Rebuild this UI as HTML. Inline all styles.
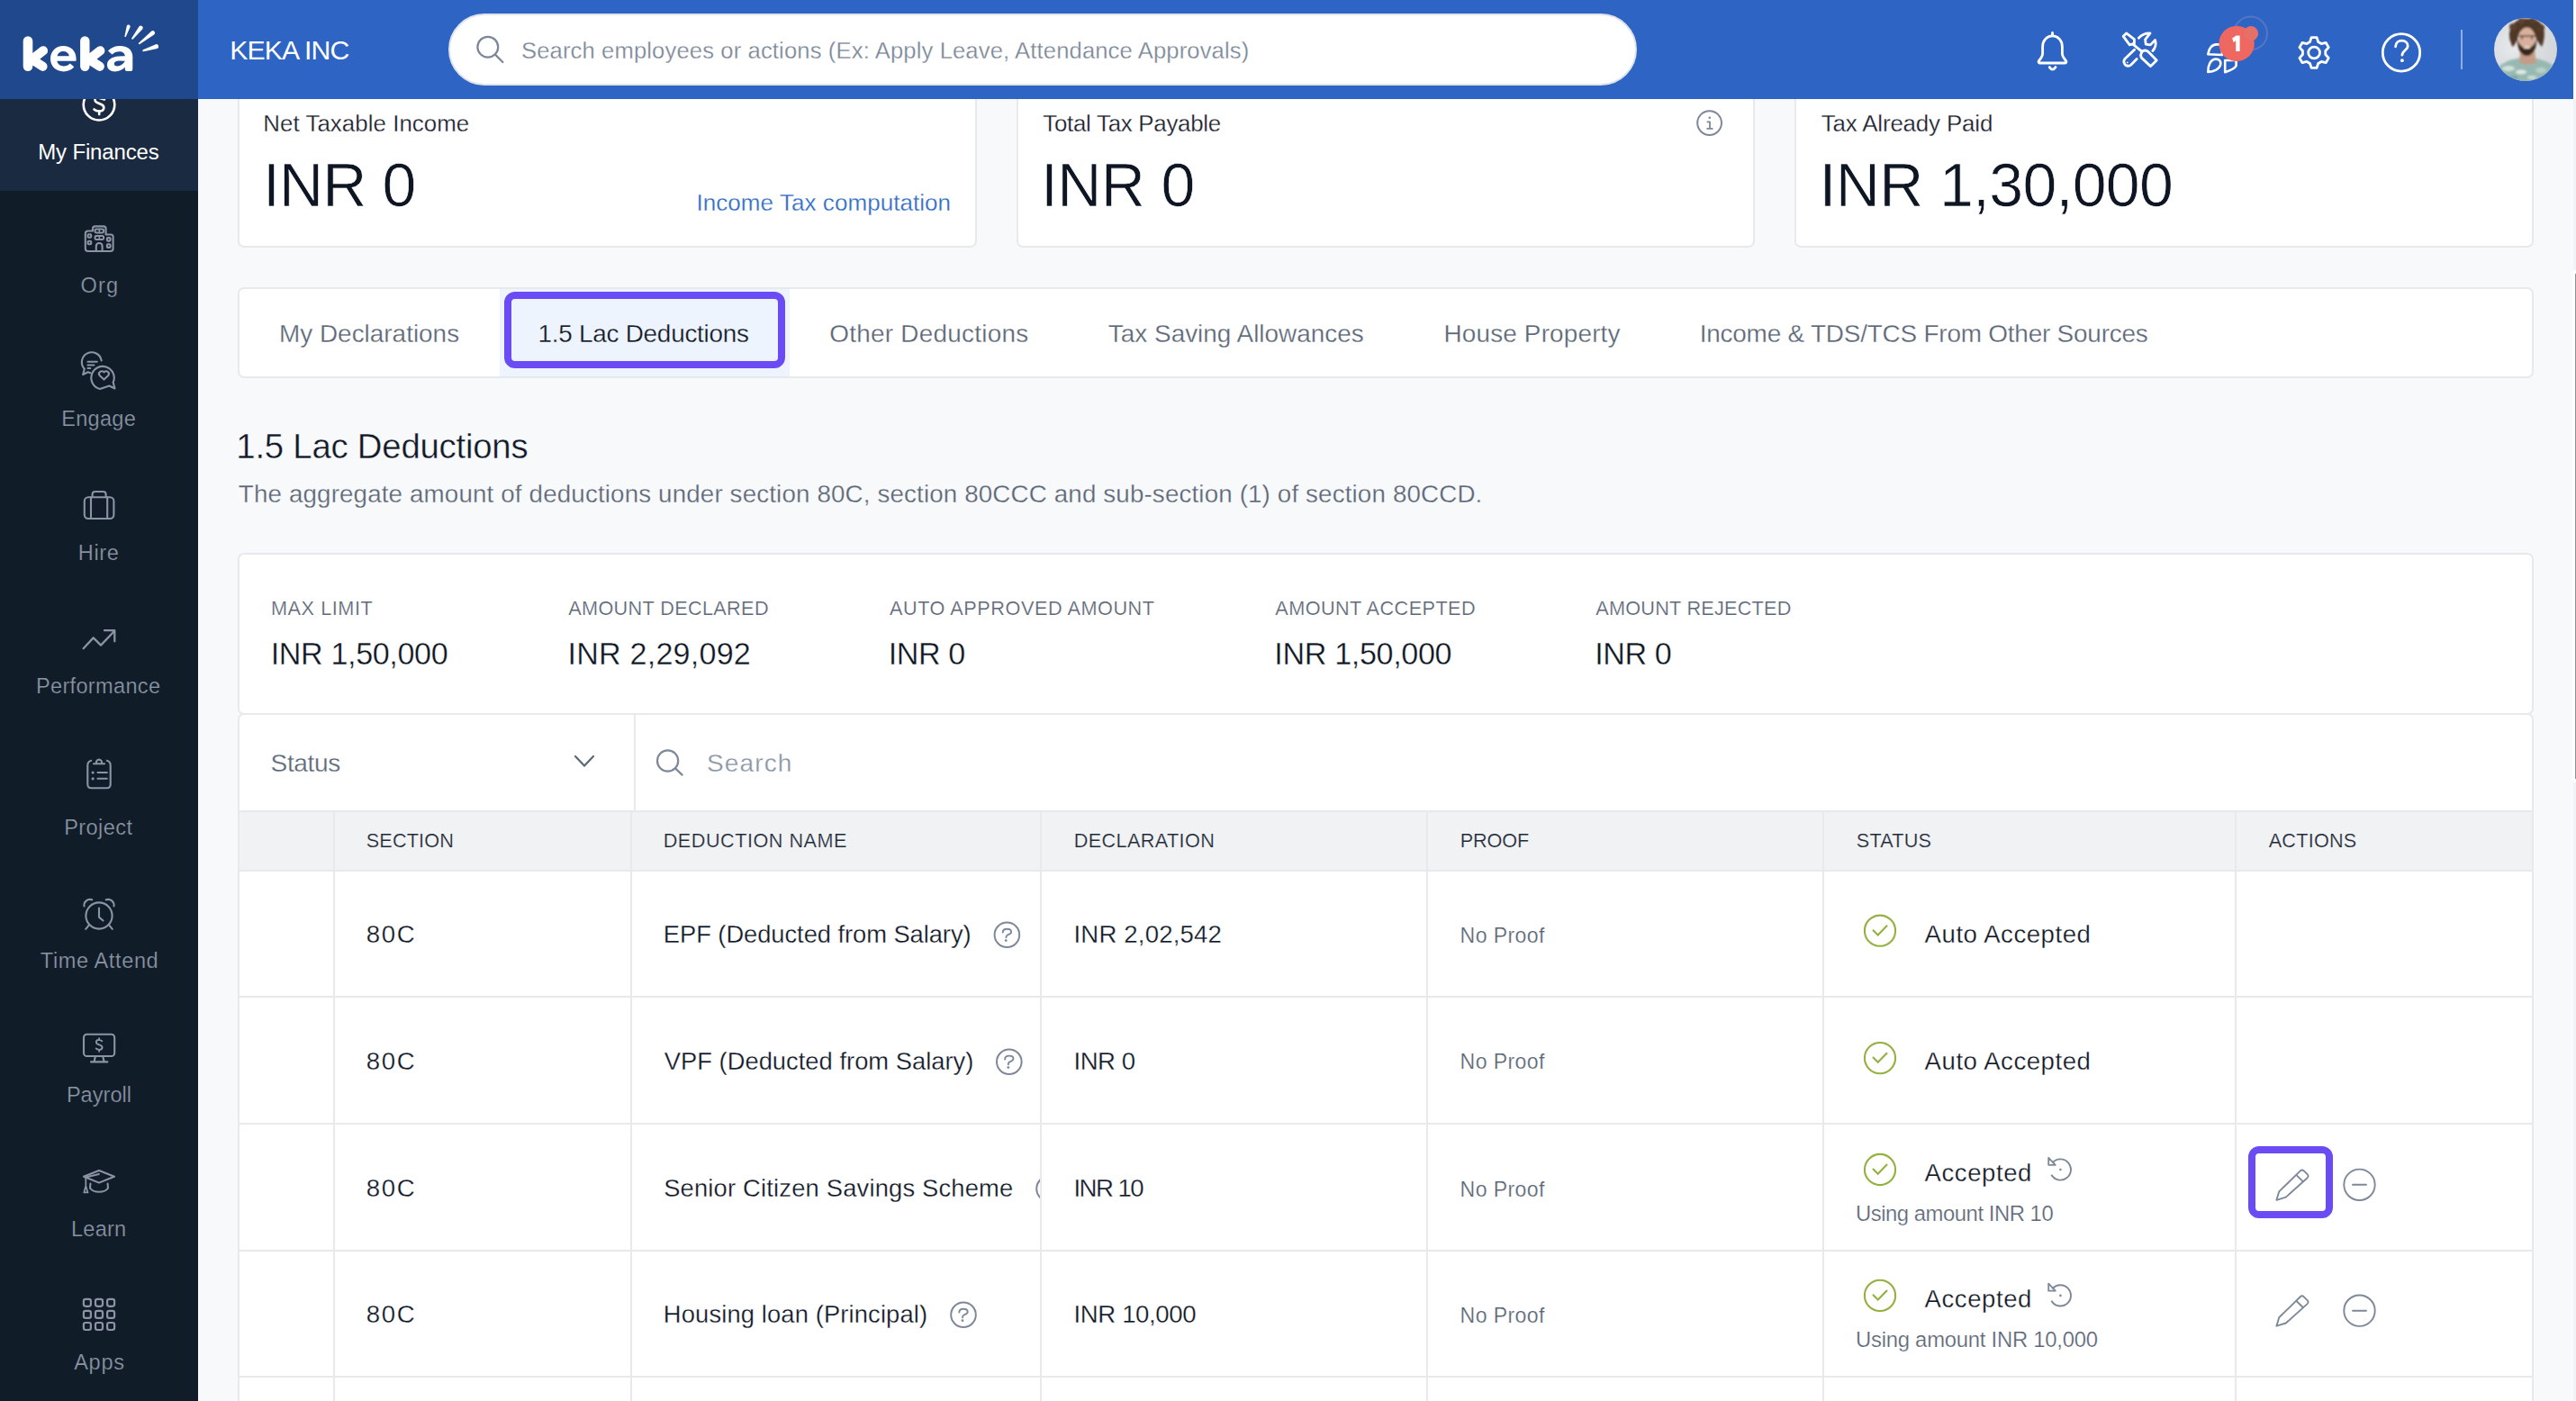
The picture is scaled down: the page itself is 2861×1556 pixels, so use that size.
<!DOCTYPE html>
<html><head><meta charset="utf-8">
<style>
html,body{margin:0;padding:0;}
body{width:2861px;height:1556px;overflow:hidden;position:relative;background:#f8f9fb;font-family:"Liberation Sans",sans-serif;}
.a{position:absolute;box-sizing:border-box;}
.t{position:absolute;white-space:nowrap;line-height:1.1172;font-family:"Liberation Sans",sans-serif;z-index:5;}
.bm{display:inline-block;width:0;height:0;vertical-align:baseline}
svg.ov{position:absolute;left:0;top:0;z-index:4;}
</style></head><body>
<!-- main cards -->
<div class="a" style="left:264px;top:80px;width:821px;height:195px;background:#fff;border:2px solid #e8e9ec;border-radius:7px"></div>
<div class="a" style="left:1129px;top:80px;width:820px;height:195px;background:#fff;border:2px solid #e8e9ec;border-radius:7px"></div>
<div class="a" style="left:1993px;top:80px;width:821px;height:195px;background:#fff;border:2px solid #e8e9ec;border-radius:7px"></div>
<!-- tabs -->
<div class="a" style="left:264px;top:319px;width:2550px;height:101px;background:#fff;border:2px solid #e8e9ec;border-radius:7px"></div>
<div class="a" style="left:555px;top:321px;width:322px;height:97px;background:#eef4fd"></div>
<div class="a" style="left:560px;top:324px;width:312px;height:85px;border:8px solid #6b4cf4;border-radius:12px;z-index:3"></div>
<!-- stats box -->
<div class="a" style="left:264px;top:614px;width:2550px;height:180px;background:#fff;border:2px solid #e8e9ec;border-radius:7px"></div>
<!-- filter + table -->
<div class="a" style="left:264px;top:792px;width:2550px;height:900px;background:#fff;border:2px solid #e8e9ec;border-radius:7px"></div>
<div class="a" style="left:266px;top:900px;width:2546px;height:68px;background:#f1f2f4;border-top:2px solid #e8e9ec;border-bottom:2px solid #e8e9ec"></div>
<div class="a" style="left:704px;top:794px;width:2px;height:106px;background:#e8e9ec"></div>
<!-- column dividers -->
<div class="a" style="left:370px;top:902px;width:2px;height:700px;background:#e8e9ec"></div>
<div class="a" style="left:700px;top:902px;width:2px;height:700px;background:#e8e9ec"></div>
<div class="a" style="left:1155px;top:902px;width:2px;height:700px;background:#e8e9ec"></div>
<div class="a" style="left:1584px;top:902px;width:2px;height:700px;background:#e8e9ec"></div>
<div class="a" style="left:2024px;top:902px;width:2px;height:700px;background:#e8e9ec"></div>
<div class="a" style="left:2482px;top:902px;width:2px;height:700px;background:#e8e9ec"></div>
<!-- row lines -->
<div class="a" style="left:266px;top:1106px;width:2546px;height:2px;background:#e8e9ec"></div>
<div class="a" style="left:266px;top:1247px;width:2546px;height:2px;background:#e8e9ec"></div>
<div class="a" style="left:266px;top:1388px;width:2546px;height:2px;background:#e8e9ec"></div>
<div class="a" style="left:266px;top:1528px;width:2546px;height:2px;background:#e8e9ec"></div>
<!-- purple box around pencil -->
<div class="a" style="left:2497px;top:1273px;width:94px;height:80px;border:8px solid #6b4cf4;border-radius:12px;z-index:3"></div>

<!-- header -->
<div class="a" style="left:220px;top:0;width:2638px;height:110px;background:#2e65c4;z-index:2"></div>
<div class="a" style="left:498px;top:15px;width:1320px;height:80px;background:#fff;border:2px solid #dfe3ea;border-radius:40px;z-index:2"></div>
<div class="a" style="left:2733px;top:33px;width:2px;height:44px;background:#8fb0e6;z-index:2"></div>
<!-- scrollbar -->
<div class="a" style="left:2858px;top:0;width:3px;height:110px;background:#ffffff;z-index:2"></div>
<div class="a" style="left:2858px;top:110px;width:3px;height:1446px;background:#f1f2f5;z-index:2"></div>
<div class="a" style="left:2857px;top:300px;width:4px;height:569px;background:#ffffff;border-radius:3px 0 0 3px;z-index:2"></div>
<div class="a" style="left:2859.5px;top:304px;width:1.5px;height:561px;background:#8c929c;z-index:2"></div>
<!-- sidebar -->
<div class="a" style="left:0;top:0;width:220px;height:1556px;background:#111c29;z-index:1"></div>
<div class="a" style="left:0;top:110px;width:220px;height:102px;background:#1a2a40;z-index:1"></div>

<svg class="ov" width="2861" height="1556" viewBox="0 0 2861 1556">
<g fill="none" stroke="#ffffff" stroke-width="2.6" stroke-linecap="round" stroke-linejoin="round">
<circle cx="110" cy="116.2" r="17.3"/>
<path d="M116,110.5 L109,108.5 C104.5,107.5 104.5,112.5 108,114 L112.5,116 C117,118 116,123.5 110.5,123.5 C107.5,123.5 105.5,122.5 104.5,121.5"/>
<path d="M110.2,123.5 L110.2,127"/>
</g>
<rect x="0" y="0" width="220" height="110" fill="#20488d"/>
<g fill="none" stroke="#8a94a3" stroke-width="2.1" stroke-linecap="round" stroke-linejoin="round">
<path d="M103,256.5 L103,254 Q103,251.4 105.6,251.4 L115,251.4 Q117.6,251.4 117.6,254 L117.6,260.5 L123,260.5 Q125.6,260.5 125.6,263 L125.6,276 Q125.6,279 122.6,279 L97.8,279 Q94.8,279 94.8,276 L94.8,259.5 Q94.8,256.5 97.8,256.5 Z"/>
<rect x="105.5" y="254.5" width="9.6" height="4" rx="1.4"/><rect x="105.5" y="262" width="9.6" height="4" rx="1.4"/><path d="M110.3,254.5 L110.3,258.5 M110.3,262 L110.3,266" stroke-width="1.6"/>
<rect x="97.6" y="260.2" width="3.6" height="3.6" rx="1"/><rect x="97.6" y="267.7" width="3.6" height="3.6" rx="1"/>
<rect x="118.9" y="264" width="3.6" height="3.6" rx="1"/><rect x="118.9" y="271.3" width="3.6" height="3.6" rx="1"/>
<path d="M106.8,279 L106.8,273.5 Q106.8,270 110.2,270 Q113.6,270 113.6,273.5 L113.6,279"/>
<path d="M112.7,400.5 A11,11 0 1 0 93.8,409.8 L92.1,416 L97.7,413.2 L100.4,414.2"/>
<path d="M97.5,401.7 L107.8,401.7 M97.5,405.5 L104.4,405.5 M97.5,409 L100.3,409"/>
<path d="M111,432 A12.7,12.7 0 1 1 125.7,424.7 L127.5,431.5 L121.4,428.5 Z"/>
<path d="M115.5,421.6 L110.6,417 A2.6,2.6 0 0 1 115.5,413.5 A2.6,2.6 0 0 1 120.3,417 Z"/>
<rect x="93.8" y="552.3" width="32.6" height="23.7" rx="4.2"/>
<path d="M102.6,552.3 L102.6,549 Q102.6,546 105.6,546 L114.6,546 Q117.6,546 117.6,549 L117.6,552.3"/>
<path d="M101,552.3 L101,576 M119.2,552.3 L119.2,576"/>
<path d="M92.6,720.2 L103.7,708.4 L112,716.6 L127.2,700.8 M116,700.2 L127.3,700.2 L127.3,712.3" stroke-width="2.3"/>
<path d="M101.2,844.7 Q97.3,845.8 97.3,850 L97.3,871 Q97.3,875.3 101.5,875.3 L118.5,875.3 Q122.7,875.3 122.7,871 L122.7,850 Q122.7,845.8 118.8,844.7"/>
<path d="M104,848.2 L116,848.2 M107,847.5 A3.1,3.1 0 1 1 113,847.5"/>
<path d="M108.5,858 L118.8,858 M108.5,864.8 L118.8,864.8"/>
</g>
<g fill="#8a94a3"><circle cx="103.1" cy="858" r="1.6"/><circle cx="103.1" cy="864.8" r="1.6"/></g>
<g fill="none" stroke="#8a94a3" stroke-width="2.1" stroke-linecap="round" stroke-linejoin="round">
<circle cx="110" cy="1017" r="14.6"/>
<path d="M110,1008.5 L110,1018.6 L114.5,1022.5"/>
<path d="M93.5,1006.4 A6.5,6.5 0 0 1 102.2,999.3 M117.8,999.3 A6.5,6.5 0 0 1 126.5,1006.4"/>
<path d="M98.5,1027.8 L95.2,1031.8 M121.5,1027.8 L124.8,1031.8"/>
<rect x="93" y="1148.8" width="34.2" height="24.2" rx="3.6"/>
<path d="M106,1173 L104.5,1179.2 M114.2,1173 L115.6,1179.2 M101,1179.4 L119.3,1179.4"/>
<path d="M113.2,1156.3 Q111.5,1154.7 109.6,1154.9 Q106.6,1155.2 106.9,1157.6 Q107.2,1159.6 110.2,1160.3 Q113.6,1161.2 113.6,1163.4 Q113.3,1166 110.1,1165.9 Q107.8,1165.8 106.7,1164.4 M110.1,1153.3 L110.1,1155 M110.1,1165.9 L110.1,1167.7" stroke-width="1.9"/>
<path d="M110,1300 L127,1306.8 L110,1313.6 L93,1306.8 Z"/>
<path d="M95.3,1307.5 L110,1304" stroke-width="1.8"/>
<path d="M100.4,1314.5 L100,1319.5 Q103,1323.8 110,1323.8 Q117,1323.8 120,1319.5 L119.6,1314.5"/>
<path d="M95.3,1307.6 L95.3,1317 L93.3,1324.4 L97.5,1324.4 L95.3,1317" stroke-width="1.8"/>
<rect x="92.9" y="1442.8" width="8.0" height="8.0" rx="2.2" stroke-width="2.2"/>
<rect x="106.0" y="1442.8" width="8.0" height="8.0" rx="2.2" stroke-width="2.2"/>
<rect x="119.1" y="1442.8" width="8.0" height="8.0" rx="2.2" stroke-width="2.2"/>
<rect x="92.9" y="1455.9" width="8.0" height="8.0" rx="2.2" stroke-width="2.2"/>
<rect x="106.0" y="1455.9" width="8.0" height="8.0" rx="2.2" stroke-width="2.2"/>
<rect x="119.1" y="1455.9" width="8.0" height="8.0" rx="2.2" stroke-width="2.2"/>
<rect x="92.9" y="1469.0" width="8.0" height="8.0" rx="2.2" stroke-width="2.2"/>
<rect x="106.0" y="1469.0" width="8.0" height="8.0" rx="2.2" stroke-width="2.2"/>
<rect x="119.1" y="1469.0" width="8.0" height="8.0" rx="2.2" stroke-width="2.2"/>
</g>
<g fill="none" stroke="#ffffff" stroke-linecap="round" stroke-linejoin="round">
<path d="M31,45.5 L31,73.8" stroke-width="10.6"/>
<path d="M48,56.3 L35.5,66 L47.5,73.8" stroke-width="10.2"/>
<path d="M94.3,45.5 L94.3,73.8" stroke-width="10.4"/>
<path d="M111.3,56.3 L98.8,66 L110.8,73.8" stroke-width="10.2"/>
</g>
<g fill="#ffffff">
<path d="M70.3,51 C62,51 56,57 56,65.3 C56,73.6 62,79.4 70.6,79.4 C75.5,79.4 79.6,77.6 82.3,74.3 L77.8,70.4 C76,72.3 73.7,73.4 70.8,73.4 C66.7,73.4 64,71 63.3,67.7 L84.4,67.7 C84.6,66.8 84.6,66 84.6,65.1 C84.6,56.6 78.6,51 70.3,51 Z M63.5,62.3 C64.3,58.9 66.8,56.9 70.3,56.9 C73.8,56.9 76.2,58.9 76.9,62.3 Z" fill-rule="evenodd"/>
<path d="M133.3,51 C127.6,51 123,53 120,56.5 L124.5,60.6 C126.6,58.4 129.3,57.2 132.5,57.2 C136.3,57.2 138.6,59.2 138.8,62.2 L132,62.6 C124,63.2 119,66.6 119,72 C119,76.7 122.6,79.4 127.6,79.4 C132.5,79.4 136.2,77.4 138.8,74.6 L138.8,77 Q138.8,79 141,79 L145.5,79 Q147.3,79 147.3,77 L147.3,63 C147.3,55.3 141.5,51 133.3,51 Z M138.8,67.7 C137,71 133.8,73.4 130.2,73.4 C128,73.4 126.8,72.4 126.8,71 C126.8,69 128.8,67.8 132.5,67.6 Z" fill-rule="evenodd"/>
</g>
<g fill="#ffffff">
<path d="M139.96,40.45 L144.60,30.02 A2.00,2.00 0 0 0 140.80,28.78 L138.44,39.95 A0.80,0.80 0 0 0 139.96,40.45 Z"/>
<path d="M147.71,43.45 L158.19,32.48 A2.40,2.40 0 0 0 154.41,29.52 L146.29,42.35 A0.90,0.90 0 0 0 147.71,43.45 Z"/>
<path d="M155.36,49.01 L171.15,38.56 A2.50,2.50 0 0 0 168.05,34.64 L154.24,47.59 A0.90,0.90 0 0 0 155.36,49.01 Z"/>
<path d="M159.50,57.15 L174.55,53.98 A2.50,2.50 0 0 0 173.05,49.22 L158.90,55.25 A1.00,1.00 0 0 0 159.50,57.15 Z"/>
</g>
<g fill="none" stroke="#ffffff" stroke-width="2.8" stroke-linecap="round" stroke-linejoin="round">
<circle cx="541.8" cy="52.2" r="11.4" stroke="#7b8797" stroke-width="2.2"/>
<path d="M550,60.6 L558.4,69" stroke="#7b8797" stroke-width="2.2"/>
<path d="M2279.5,39.9 C2273.2,39.9 2268.6,45.2 2268.6,52 L2268.6,59.6 C2268.6,62.8 2266.6,65 2264.6,67.4 C2263.6,68.8 2264.3,70 2266,70 L2293,70 C2294.7,70 2295.4,68.8 2294.4,67.4 C2292.4,65 2290.4,62.8 2290.4,59.6 L2290.4,52 C2290.4,45.2 2285.8,39.9 2279.5,39.9 Z"/>
<path d="M2279.5,36.4 L2279.5,39.6 M2276.2,74.6 Q2279.6,79.6 2283,74.6"/>
<path d="M2358.2,40.3 L2361.6,36.9 L2370.4,43.7 L2370.4,48.5 L2365.3,49.8 Z"/>
<path d="M2368.6,48.8 L2379,57.4"/>
<path d="M2379.5,56.8 Q2383,54.8 2386,57.6 L2395.2,67 L2388.6,73.6 L2378.6,64.4 Q2376.2,61 2379.5,56.8 Z"/>
<path d="M2370.6,55.3 L2359.8,65.6 Q2357.6,69 2360.6,72.2 Q2364,74.4 2366.8,72 L2373.2,65.6"/>
<path d="M2375.3,42.2 Q2380.3,36.7 2388,36.9 L2382.6,43.9 L2383.2,49.2 L2388.3,49.9 L2393.6,44.4 Q2395.6,51.5 2390.8,56.5"/>
</g>
<circle cx="2362.7" cy="69.3" r="0.9" fill="#ffffff"/>
<g fill="none" stroke="#ffffff" stroke-width="2.6" stroke-linejoin="round" stroke-linecap="round">
<path d="M2452.3,79.9 C2452.3,72 2455.3,66 2460.6,65.6 C2464.6,65.4 2467,68 2466.2,71.8 C2465,76.6 2459,79.9 2452.3,79.9 Z"/>
<path d="M2471.2,80.2 L2471.2,67 L2483.6,67 L2483.6,73 C2482,76.5 2476.5,78.4 2471.2,80.2 Z"/>
<path d="M2452.3,60.2 C2453.2,54.6 2456,50 2461,49.4 L2468,49.4 L2468,61 L2452.3,60.2 Z"/>
</g>
<circle cx="2499.6" cy="37" r="18.4" fill="none" stroke="#9b8fc4" stroke-opacity="0.38" stroke-width="2"/>
<circle cx="2484.1" cy="48.4" r="19.7" fill="#ee6761"/>
<circle cx="2500" cy="37.2" r="8.1" fill="#e66f67"/>
<path d="M2479.2,42.6 L2483.6,39.4 L2487.6,39.4 L2487.6,56.9 L2483.2,56.9 L2483.2,45.2 L2480.6,47.0 Z" fill="#ffffff"/>
<path d="M2565.51,46.55 L2567.11,41.56 L2573.09,41.56 L2574.69,46.55 L2578.16,48.55 L2583.28,47.44 L2586.26,52.62 L2582.74,56.50 L2582.74,60.50 L2586.26,64.38 L2583.28,69.56 L2578.16,68.45 L2574.69,70.45 L2573.09,75.44 L2567.11,75.44 L2565.51,70.45 L2562.04,68.45 L2556.92,69.56 L2553.94,64.38 L2557.46,60.50 L2557.46,56.50 L2553.94,52.62 L2556.92,47.44 L2562.04,48.55 Z" fill="none" stroke="#ffffff" stroke-width="2.8" stroke-linejoin="round"/>
<circle cx="2570.1" cy="58.5" r="6.4" fill="none" stroke="#ffffff" stroke-width="2.8"/>
<circle cx="2667" cy="58.4" r="20.7" fill="none" stroke="#ffffff" stroke-width="2.8"/>
<path d="M2660.6,51.8 C2660.8,47.4 2663.8,45.2 2667.5,45.2 C2671.3,45.2 2674.2,47.6 2674.2,51.2 C2674.2,55.4 2667.9,56.2 2667.9,61.2" fill="none" stroke="#ffffff" stroke-width="2.8" stroke-linecap="round"/>
<circle cx="2667.9" cy="67.2" r="1.9" fill="#ffffff"/>
<defs><clipPath id="av"><circle cx="2805" cy="54.9" r="35"/></clipPath><filter id="avb" x="-10%" y="-10%" width="120%" height="120%"><feGaussianBlur stdDeviation="0.9"/></filter><radialGradient id="avbg" cx="0.35" cy="0.45" r="0.7"><stop offset="0" stop-color="#e8eaec"/><stop offset="1" stop-color="#cfd3d6"/></radialGradient></defs>
<g clip-path="url(#av)">
<rect x="2768" y="18" width="74" height="74" fill="url(#avbg)"/>
<g filter="url(#avb)">
<path d="M2770,80 C2776,70 2790,64 2806,64 C2822,64 2836,70 2842,80 L2842,95 L2770,95 Z" fill="#96bab2"/>
<ellipse cx="2786" cy="76" rx="7" ry="3" fill="#d3e0d8"/><ellipse cx="2800" cy="80" rx="6" ry="2.5" fill="#e0e8e2"/><ellipse cx="2822" cy="78" rx="6" ry="3" fill="#b9d1c8"/><ellipse cx="2812" cy="86" rx="5" ry="2" fill="#cfdcd6"/><ellipse cx="2792" cy="86" rx="5" ry="2" fill="#7fa8a2"/>
<path d="M2799,56 L2815,56 L2817,70 C2812,72 2803,72 2798,70 Z" fill="#c49c88"/>
<path d="M2789,48 C2785,40 2787,30 2793,25 C2797,21 2803,20 2808,21 C2814,20 2821,23 2824,29 C2827,35 2826,45 2823,52 C2821,50 2819,46 2817,44 C2816,38 2813,33 2806,32 C2800,32 2797,37 2796,44 C2794,47 2793,50 2791,52 C2790,51 2789,50 2789,48 Z" fill="#4f3727"/>
<circle cx="2791" cy="30" r="4" fill="#5b412f"/><circle cx="2822" cy="31" r="4" fill="#543b2b"/><circle cx="2800" cy="23.5" r="3.5" fill="#5e4332"/><circle cx="2813" cy="23" r="3.5" fill="#553c2c"/>
<ellipse cx="2806.5" cy="44" rx="9.5" ry="13.5" fill="#d8b09d"/>
<path d="M2796,42 C2795,54 2800,62 2806.5,62 C2813,62 2818,54 2817,42 C2816,48 2813,53 2806.5,53.5 C2800,53 2797,48 2796,42 Z" fill="#3a281e"/>
<ellipse cx="2806.5" cy="52.5" rx="4" ry="1.6" fill="#e9d2c6"/>
<path d="M2797.5,40 L2816,40 M2801,40 L2801,44 M2812,40 L2812,44" stroke="#5a4032" stroke-width="1.4" fill="none"/>
</g>
</g>
<g fill="none" stroke="#7d8898" stroke-width="2" stroke-linecap="round" stroke-linejoin="round">
<circle cx="1898.6" cy="136.6" r="13.4"/>
<path d="M1896.4,135.4 L1899,135.4 L1899,142.6 M1896.2,142.9 L1901.8,142.9" stroke-width="1.8"/>
</g>
<circle cx="1898.8" cy="130.8" r="1.3" fill="#7d8898"/>
<g fill="none" stroke="#7d8898" stroke-width="2.2" stroke-linecap="round" stroke-linejoin="round">
<circle cx="741.6" cy="845" r="11.6"/>
<path d="M750,853.4 L757.6,860.6"/>
<path d="M639,840 L649,850.6 L659,840" stroke="#5b6676"/>
</g>
<g fill="none" stroke="#7d8898" stroke-width="2" stroke-linecap="round">
<circle cx="1118.4" cy="1038.3" r="13.8"/><path d="M1113.7,1035.6 C1113.7,1032.7 1115.8,1031.7 1118.4,1031.7 C1121.4,1031.7 1123.1,1032.9 1123.1,1034.9 C1123.1,1037.1 1120.6,1037.7 1118.8,1038.5 C1117.6,1039.1 1117.4,1040.1 1117.4,1041.3" stroke-width="1.9"/>
<circle cx="1120.8" cy="1179.2" r="13.8"/><path d="M1116.1,1176.5 C1116.1,1173.6 1118.2,1172.6 1120.8,1172.6 C1123.8,1172.6 1125.5,1173.8 1125.5,1175.8 C1125.5,1178.0 1123.0,1178.6 1121.2,1179.4 C1120.0,1180.0 1119.8,1181.0 1119.8,1182.2" stroke-width="1.9"/>
<circle cx="1070" cy="1460.3" r="13.8"/><path d="M1065.3,1457.6 C1065.3,1454.7 1067.4,1453.7 1070.0,1453.7 C1073.0,1453.7 1074.7,1454.9 1074.7,1456.9 C1074.7,1459.1 1072.2,1459.7 1070.4,1460.5 C1069.2,1461.1 1069.0,1462.1 1069.0,1463.3" stroke-width="1.9"/>
</g>
<g fill="#7d8898"><circle cx="1117.2" cy="1044.6" r="1.4"/><circle cx="1119.8" cy="1185.6" r="1.4"/><circle cx="1069" cy="1466.7" r="1.4"/></g>
<defs><clipPath id="c3"><rect x="1000" y="1248" width="155" height="140"/></clipPath></defs>
<g clip-path="url(#c3)" fill="none" stroke="#7d8898" stroke-width="2"><circle cx="1165" cy="1320.3" r="13.8"/></g>
<circle cx="2088" cy="1033.7" r="17.1" fill="none" stroke="#94b13f" stroke-width="2.1"/><path d="M2080.7,1033.4 L2085.7,1038.4 L2095.3,1028.5" fill="none" stroke="#94b13f" stroke-width="2.1" stroke-linecap="square"/>
<circle cx="2088" cy="1175.1" r="17.1" fill="none" stroke="#94b13f" stroke-width="2.1"/><path d="M2080.7,1174.8 L2085.7,1179.8 L2095.3,1169.9" fill="none" stroke="#94b13f" stroke-width="2.1" stroke-linecap="square"/>
<circle cx="2088" cy="1299.0" r="17.1" fill="none" stroke="#94b13f" stroke-width="2.1"/><path d="M2080.7,1298.7 L2085.7,1303.7 L2095.3,1293.8" fill="none" stroke="#94b13f" stroke-width="2.1" stroke-linecap="square"/>
<circle cx="2088" cy="1438.9" r="17.1" fill="none" stroke="#94b13f" stroke-width="2.1"/><path d="M2080.7,1438.6 L2085.7,1443.6 L2095.3,1433.7" fill="none" stroke="#94b13f" stroke-width="2.1" stroke-linecap="square"/>
<path d="M2279.51,1291.54 A11.6,11.6 0 1 1 2278.35,1304.80" fill="none" stroke="#7d8898" stroke-width="1.9"/><path d="M2275.2,1285.8 L2275.2,1293.8 L2282.8,1293.8 Z" fill="none" stroke="#7d8898" stroke-width="1.8" stroke-linejoin="round"/><circle cx="2288.4" cy="1299.0" r="1.3" fill="#7d8898"/>
<path d="M2279.51,1431.44 A11.6,11.6 0 1 1 2278.35,1444.70" fill="none" stroke="#7d8898" stroke-width="1.9"/><path d="M2275.2,1425.7 L2275.2,1433.7 L2282.8,1433.7 Z" fill="none" stroke="#7d8898" stroke-width="1.8" stroke-linejoin="round"/><circle cx="2288.4" cy="1438.9" r="1.3" fill="#7d8898"/>
<g transform="translate(0,0)" fill="none" stroke="#7d8898" stroke-width="1.9" stroke-linejoin="round"><path d="M2528.4,1332.8 L2531.2,1323.4 L2554.8,1300.4 Q2556.8,1298.4 2558.8,1300.4 L2562.6,1304.2 Q2564.6,1306.2 2562.6,1308.2 L2538.8,1329.6 Z"/><path d="M2550,1304.6 L2558.2,1312.6"/></g>
<g transform="translate(0,139.9)" fill="none" stroke="#7d8898" stroke-width="1.9" stroke-linejoin="round"><path d="M2528.4,1332.8 L2531.2,1323.4 L2554.8,1300.4 Q2556.8,1298.4 2558.8,1300.4 L2562.6,1304.2 Q2564.6,1306.2 2562.6,1308.2 L2538.8,1329.6 Z"/><path d="M2550,1304.6 L2558.2,1312.6"/></g>
<circle cx="2620.5" cy="1315.8" r="17.2" fill="none" stroke="#7d8898" stroke-width="1.9"/><path d="M2613,1315.8 L2628,1315.8" stroke="#7d8898" stroke-width="1.9" stroke-linecap="round"/>
<circle cx="2620.5" cy="1455.7" r="17.2" fill="none" stroke="#7d8898" stroke-width="1.9"/><path d="M2613,1455.7 L2628,1455.7" stroke="#7d8898" stroke-width="1.9" stroke-linecap="round"/>
</svg>
<div class="t" style="left:255.23px;top:39.01px;font-size:30.23px;letter-spacing:-0.910px;color:#ffffff;font-weight:400;-webkit-text-stroke:0.00px #2e65c4"><i class="bm"></i>KEKA INC</div>
<div class="t" style="left:579.00px;top:42.01px;font-size:25.58px;letter-spacing:0.139px;color:#7b8797;font-weight:400;-webkit-text-stroke:0.26px #ffffff"><i class="bm"></i>Search employees or actions (Ex: Apply Leave, Attendance Approvals)</div>
<div class="t" style="left:42.23px;top:155.51px;font-size:23.98px;letter-spacing:-0.141px;color:#ffffff;font-weight:400;-webkit-text-stroke:0.00px #1a2a40"><i class="bm"></i>My Finances</div>
<div class="t" style="left:89.59px;top:304.40px;font-size:23.55px;letter-spacing:1.077px;color:#8a94a3;font-weight:400;-webkit-text-stroke:0.24px #111c29"><i class="bm"></i>Org</div>
<div class="t" style="left:68.30px;top:452.40px;font-size:23.55px;letter-spacing:0.262px;color:#8a94a3;font-weight:400;-webkit-text-stroke:0.24px #111c29"><i class="bm"></i>Engage</div>
<div class="t" style="left:86.71px;top:600.81px;font-size:23.55px;letter-spacing:0.671px;color:#8a94a3;font-weight:400;-webkit-text-stroke:0.24px #111c29"><i class="bm"></i>Hire</div>
<div class="t" style="left:39.93px;top:749.31px;font-size:23.55px;letter-spacing:0.332px;color:#8a94a3;font-weight:400;-webkit-text-stroke:0.24px #111c29"><i class="bm"></i>Performance</div>
<div class="t" style="left:71.20px;top:906.01px;font-size:23.55px;letter-spacing:0.418px;color:#8a94a3;font-weight:400;-webkit-text-stroke:0.24px #111c29"><i class="bm"></i>Project</div>
<div class="t" style="left:44.80px;top:1054.01px;font-size:23.55px;letter-spacing:0.613px;color:#8a94a3;font-weight:400;-webkit-text-stroke:0.24px #111c29"><i class="bm"></i>Time Attend</div>
<div class="t" style="left:73.90px;top:1203.12px;font-size:23.55px;letter-spacing:0.018px;color:#8a94a3;font-weight:400;-webkit-text-stroke:0.24px #111c29"><i class="bm"></i>Payroll</div>
<div class="t" style="left:79.12px;top:1351.51px;font-size:23.55px;letter-spacing:0.163px;color:#8a94a3;font-weight:400;-webkit-text-stroke:0.24px #111c29"><i class="bm"></i>Learn</div>
<div class="t" style="left:82.22px;top:1499.62px;font-size:23.55px;letter-spacing:0.678px;color:#8a94a3;font-weight:400;-webkit-text-stroke:0.24px #111c29"><i class="bm"></i>Apps</div>
<div class="t" style="left:292.31px;top:122.81px;font-size:25.87px;letter-spacing:0.050px;color:#1a202c;font-weight:400;-webkit-text-stroke:0.26px #ffffff"><i class="bm"></i>Net Taxable Income</div>
<div class="t" style="left:291.92px;top:166.91px;font-size:68.02px;letter-spacing:-0.862px;color:#0f1623;font-weight:400;-webkit-text-stroke:0.68px #ffffff"><i class="bm"></i>INR 0</div>
<div class="t" style="left:1158.31px;top:122.81px;font-size:25.87px;letter-spacing:-0.273px;color:#1a202c;font-weight:400;-webkit-text-stroke:0.26px #ffffff"><i class="bm"></i>Total Tax Payable</div>
<div class="t" style="left:1155.92px;top:166.91px;font-size:68.02px;letter-spacing:-0.593px;color:#0f1623;font-weight:400;-webkit-text-stroke:0.68px #ffffff"><i class="bm"></i>INR 0</div>
<div class="t" style="left:2022.77px;top:122.91px;font-size:25.87px;letter-spacing:-0.141px;color:#1a202c;font-weight:400;-webkit-text-stroke:0.26px #ffffff"><i class="bm"></i>Tax Already Paid</div>
<div class="t" style="left:2020.61px;top:167.02px;font-size:68.02px;letter-spacing:-0.680px;color:#0f1623;font-weight:400;-webkit-text-stroke:0.68px #ffffff"><i class="bm"></i>INR 1,30,000</div>
<div class="t" style="left:773.46px;top:211.11px;font-size:26.02px;letter-spacing:0.053px;color:#2f6bc6;font-weight:400;-webkit-text-stroke:0.26px #ffffff"><i class="bm"></i>Income Tax computation</div>
<div class="t" style="left:310.00px;top:355.02px;font-size:27.91px;letter-spacing:0.003px;color:#5b6676;font-weight:400;-webkit-text-stroke:0.28px #ffffff"><i class="bm"></i>My Declarations</div>
<div class="t" style="left:597.46px;top:355.02px;font-size:27.91px;letter-spacing:-0.255px;color:#111827;font-weight:400;-webkit-text-stroke:0.28px #eef4fd"><i class="bm"></i>1.5 Lac Deductions</div>
<div class="t" style="left:921.31px;top:355.02px;font-size:27.91px;letter-spacing:0.253px;color:#5b6676;font-weight:400;-webkit-text-stroke:0.28px #ffffff"><i class="bm"></i>Other Deductions</div>
<div class="t" style="left:1230.84px;top:355.02px;font-size:27.91px;letter-spacing:0.001px;color:#5b6676;font-weight:400;-webkit-text-stroke:0.28px #ffffff"><i class="bm"></i>Tax Saving Allowances</div>
<div class="t" style="left:1603.46px;top:355.02px;font-size:27.91px;letter-spacing:0.165px;color:#5b6676;font-weight:400;-webkit-text-stroke:0.28px #ffffff"><i class="bm"></i>House Property</div>
<div class="t" style="left:1887.69px;top:355.02px;font-size:27.91px;letter-spacing:-0.205px;color:#5b6676;font-weight:400;-webkit-text-stroke:0.28px #ffffff"><i class="bm"></i>Income &amp; TDS/TCS From Other Sources</div>
<div class="t" style="left:262.30px;top:475.11px;font-size:38.37px;letter-spacing:-0.243px;color:#111827;font-weight:400;-webkit-text-stroke:0.38px #f8f9fb"><i class="bm"></i>1.5 Lac Deductions</div>
<div class="t" style="left:264.84px;top:533.10px;font-size:27.76px;letter-spacing:0.142px;color:#5b6676;font-weight:400;-webkit-text-stroke:0.28px #f8f9fb"><i class="bm"></i>The aggregate amount of deductions under section 80C, section 80CCC and sub-section (1) of section 80CCD.</div>
<div class="t" style="left:300.99px;top:664.02px;font-size:21.66px;letter-spacing:0.551px;color:#5b6676;font-weight:400;-webkit-text-stroke:0.22px #ffffff"><i class="bm"></i>MAX LIMIT</div>
<div class="t" style="left:300.69px;top:707.00px;font-size:34.16px;letter-spacing:-0.388px;color:#0f1623;font-weight:400;-webkit-text-stroke:0.34px #ffffff"><i class="bm"></i>INR 1,50,000</div>
<div class="t" style="left:631.23px;top:664.02px;font-size:21.66px;letter-spacing:0.352px;color:#5b6676;font-weight:400;-webkit-text-stroke:0.22px #ffffff"><i class="bm"></i>AMOUNT DECLARED</div>
<div class="t" style="left:630.46px;top:707.00px;font-size:34.16px;letter-spacing:0.193px;color:#0f1623;font-weight:400;-webkit-text-stroke:0.34px #ffffff"><i class="bm"></i>INR 2,29,092</div>
<div class="t" style="left:988.00px;top:664.02px;font-size:21.66px;letter-spacing:0.549px;color:#5b6676;font-weight:400;-webkit-text-stroke:0.22px #ffffff"><i class="bm"></i>AUTO APPROVED AMOUNT</div>
<div class="t" style="left:986.69px;top:707.00px;font-size:34.16px;letter-spacing:-0.443px;color:#0f1623;font-weight:400;-webkit-text-stroke:0.34px #ffffff"><i class="bm"></i>INR 0</div>
<div class="t" style="left:1416.31px;top:664.02px;font-size:21.66px;letter-spacing:0.436px;color:#5b6676;font-weight:400;-webkit-text-stroke:0.22px #ffffff"><i class="bm"></i>AMOUNT ACCEPTED</div>
<div class="t" style="left:1415.31px;top:707.00px;font-size:34.16px;letter-spacing:-0.367px;color:#0f1623;font-weight:400;-webkit-text-stroke:0.34px #ffffff"><i class="bm"></i>INR 1,50,000</div>
<div class="t" style="left:1772.31px;top:664.02px;font-size:21.66px;letter-spacing:0.238px;color:#5b6676;font-weight:400;-webkit-text-stroke:0.22px #ffffff"><i class="bm"></i>AMOUNT REJECTED</div>
<div class="t" style="left:1771.31px;top:707.00px;font-size:34.16px;letter-spacing:-0.483px;color:#0f1623;font-weight:400;-webkit-text-stroke:0.34px #ffffff"><i class="bm"></i>INR 0</div>
<div class="t" style="left:300.61px;top:832.10px;font-size:28.05px;letter-spacing:-0.372px;color:#5b6676;font-weight:400;-webkit-text-stroke:0.28px #ffffff"><i class="bm"></i>Status</div>
<div class="t" style="left:784.92px;top:832.10px;font-size:28.05px;letter-spacing:1.133px;color:#8a95a5;font-weight:400;-webkit-text-stroke:0.28px #ffffff"><i class="bm"></i>Search</div>
<div class="t" style="left:406.76px;top:922.02px;font-size:21.66px;letter-spacing:0.129px;color:#1f2937;font-weight:400;-webkit-text-stroke:0.22px #f1f2f4"><i class="bm"></i>SECTION</div>
<div class="t" style="left:736.69px;top:922.02px;font-size:21.66px;letter-spacing:0.495px;color:#1f2937;font-weight:400;-webkit-text-stroke:0.22px #f1f2f4"><i class="bm"></i>DEDUCTION NAME</div>
<div class="t" style="left:1192.69px;top:922.02px;font-size:21.66px;letter-spacing:0.368px;color:#1f2937;font-weight:400;-webkit-text-stroke:0.22px #f1f2f4"><i class="bm"></i>DECLARATION</div>
<div class="t" style="left:1621.69px;top:922.02px;font-size:21.66px;letter-spacing:-0.133px;color:#1f2937;font-weight:400;-webkit-text-stroke:0.22px #f1f2f4"><i class="bm"></i>PROOF</div>
<div class="t" style="left:2061.76px;top:922.02px;font-size:21.66px;letter-spacing:0.202px;color:#1f2937;font-weight:400;-webkit-text-stroke:0.22px #f1f2f4"><i class="bm"></i>STATUS</div>
<div class="t" style="left:2519.69px;top:922.02px;font-size:21.66px;letter-spacing:0.224px;color:#1f2937;font-weight:400;-webkit-text-stroke:0.22px #f1f2f4"><i class="bm"></i>ACTIONS</div>
<div class="t" style="left:406.69px;top:1023.10px;font-size:27.62px;letter-spacing:1.725px;color:#111827;font-weight:400;-webkit-text-stroke:0.28px #ffffff"><i class="bm"></i>80C</div>
<div class="t" style="left:736.85px;top:1023.10px;font-size:27.33px;letter-spacing:-0.058px;color:#111827;font-weight:400;-webkit-text-stroke:0.27px #ffffff"><i class="bm"></i>EPF (Deducted from Salary)</div>
<div class="t" style="left:1192.46px;top:1023.10px;font-size:27.62px;letter-spacing:0.165px;color:#111827;font-weight:400;-webkit-text-stroke:0.28px #ffffff"><i class="bm"></i>INR 2,02,542</div>
<div class="t" style="left:1621.61px;top:1026.71px;font-size:23.11px;letter-spacing:0.373px;color:#5b6676;font-weight:400;-webkit-text-stroke:0.23px #ffffff"><i class="bm"></i>No Proof</div>
<div class="t" style="left:2137.62px;top:1023.10px;font-size:27.62px;letter-spacing:0.520px;color:#111827;font-weight:400;-webkit-text-stroke:0.28px #ffffff"><i class="bm"></i>Auto Accepted</div>
<div class="t" style="left:406.69px;top:1163.71px;font-size:27.62px;letter-spacing:1.725px;color:#111827;font-weight:400;-webkit-text-stroke:0.28px #ffffff"><i class="bm"></i>80C</div>
<div class="t" style="left:737.77px;top:1163.71px;font-size:27.33px;letter-spacing:0.016px;color:#111827;font-weight:400;-webkit-text-stroke:0.27px #ffffff"><i class="bm"></i>VPF (Deducted from Salary)</div>
<div class="t" style="left:1192.46px;top:1163.71px;font-size:27.62px;letter-spacing:-0.477px;color:#111827;font-weight:400;-webkit-text-stroke:0.28px #ffffff"><i class="bm"></i>INR 0</div>
<div class="t" style="left:1621.61px;top:1167.30px;font-size:23.11px;letter-spacing:0.373px;color:#5b6676;font-weight:400;-webkit-text-stroke:0.23px #ffffff"><i class="bm"></i>No Proof</div>
<div class="t" style="left:2137.62px;top:1163.71px;font-size:27.62px;letter-spacing:0.520px;color:#111827;font-weight:400;-webkit-text-stroke:0.28px #ffffff"><i class="bm"></i>Auto Accepted</div>
<div class="t" style="left:406.69px;top:1304.91px;font-size:27.62px;letter-spacing:1.725px;color:#111827;font-weight:400;-webkit-text-stroke:0.28px #ffffff"><i class="bm"></i>80C</div>
<div class="t" style="left:737.15px;top:1304.90px;font-size:27.33px;letter-spacing:0.191px;color:#111827;font-weight:400;-webkit-text-stroke:0.27px #ffffff"><i class="bm"></i>Senior Citizen Savings Scheme</div>
<div class="t" style="left:1192.46px;top:1304.91px;font-size:27.62px;letter-spacing:-1.545px;color:#111827;font-weight:400;-webkit-text-stroke:0.28px #ffffff"><i class="bm"></i>INR 10</div>
<div class="t" style="left:1621.61px;top:1308.50px;font-size:23.11px;letter-spacing:0.373px;color:#5b6676;font-weight:400;-webkit-text-stroke:0.23px #ffffff"><i class="bm"></i>No Proof</div>
<div class="t" style="left:2137.62px;top:1287.92px;font-size:27.47px;letter-spacing:0.601px;color:#111827;font-weight:400;-webkit-text-stroke:0.27px #ffffff"><i class="bm"></i>Accepted</div>
<div class="t" style="left:2060.99px;top:1335.30px;font-size:23.84px;letter-spacing:-0.453px;color:#5b6676;font-weight:400;-webkit-text-stroke:0.24px #ffffff"><i class="bm"></i>Using amount INR 10</div>
<div class="t" style="left:406.69px;top:1445.00px;font-size:27.62px;letter-spacing:1.725px;color:#111827;font-weight:400;-webkit-text-stroke:0.28px #ffffff"><i class="bm"></i>80C</div>
<div class="t" style="left:736.85px;top:1445.01px;font-size:27.33px;letter-spacing:0.136px;color:#111827;font-weight:400;-webkit-text-stroke:0.27px #ffffff"><i class="bm"></i>Housing loan (Principal)</div>
<div class="t" style="left:1192.46px;top:1445.00px;font-size:27.62px;letter-spacing:-0.384px;color:#111827;font-weight:400;-webkit-text-stroke:0.28px #ffffff"><i class="bm"></i>INR 10,000</div>
<div class="t" style="left:1621.61px;top:1448.61px;font-size:23.11px;letter-spacing:0.373px;color:#5b6676;font-weight:400;-webkit-text-stroke:0.23px #ffffff"><i class="bm"></i>No Proof</div>
<div class="t" style="left:2137.62px;top:1428.01px;font-size:27.47px;letter-spacing:0.601px;color:#111827;font-weight:400;-webkit-text-stroke:0.27px #ffffff"><i class="bm"></i>Accepted</div>
<div class="t" style="left:2060.99px;top:1475.10px;font-size:23.84px;letter-spacing:-0.234px;color:#5b6676;font-weight:400;-webkit-text-stroke:0.24px #ffffff"><i class="bm"></i>Using amount INR 10,000</div>
</body></html>
